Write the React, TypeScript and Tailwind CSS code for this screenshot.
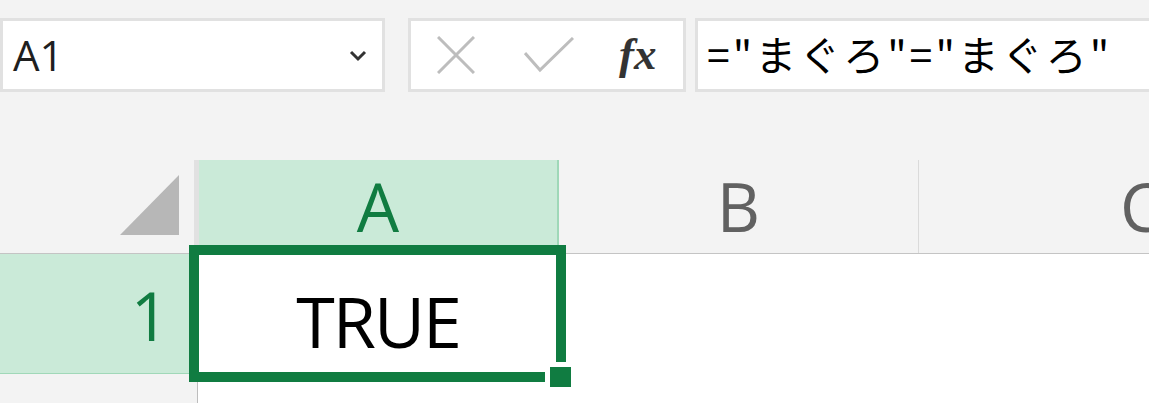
export default function App() {
  const ui = { fontFamily: '"Open Sans", "Noto Sans", sans-serif' }
  return (
    <div className="w-[1149px] h-[403px] bg-[#f3f3f3] overflow-hidden flex flex-col">
      {/* formula toolbar */}
      <div className="h-[160px] shrink-0 flex items-start pt-[18px]">
        <div className="w-[385px] h-[74px] shrink-0 bg-white border-[3px] border-[#e1e1e1] flex items-center justify-between pl-[10px] pr-[15px]">
          <span className="text-[42px] leading-none text-[#1f1f1f]" style={ui}>A1</span>
          <svg width="18" height="12" viewBox="0 0 18 12" className="mt-[2px]">
            <path d="M2 2 L9 9 L16 2" fill="none" stroke="#333" strokeWidth="3" />
          </svg>
        </div>
        <div className="ml-[23px] w-[278px] h-[74px] shrink-0 bg-white border-[3px] border-[#e1e1e1] flex items-center pl-[26px]">
          <svg width="38" height="38" viewBox="0 0 38 38">
            <path d="M1 1 L37 37 M37 1 L1 37" stroke="#bdbdbd" strokeWidth="3" fill="none" />
          </svg>
          <svg width="50" height="36" viewBox="0 0 50 36" className="ml-[49px]">
            <path d="M1 16 L16 33 L49 1" stroke="#bdbdbd" strokeWidth="3" fill="none" />
          </svg>
          <span
            className="ml-[45px] text-[45px] leading-none italic font-bold text-[#333] -mt-[2px]"
            style={{ fontFamily: '"Liberation Serif", serif' }}
          >
            fx
          </span>
        </div>
        <div className="ml-[9px] flex-1 min-w-[460px] h-[74px] bg-white border-[3px] border-r-0 border-[#e1e1e1] pl-[9px] pt-[6px]">
          <span
            className="text-[41px] leading-[52px] tracking-[3px] text-black whitespace-nowrap"
            style={{ fontFamily: '"Noto Sans CJK JP", sans-serif' }}
          >
            ="まぐろ"="まぐろ"
          </span>
        </div>
      </div>

      {/* sheet */}
      <div className="relative flex-1 flex flex-col" style={ui}>
        <div className="h-[94px] shrink-0 flex border-b border-[#c4c4c4]">
          <div className="w-[194px] shrink-0 flex items-end justify-end pr-[15px] pb-[18px]">
            <svg width="59" height="60" viewBox="0 0 59 60">
              <polygon points="59,0 59,60 0,60" fill="#b7b7b7" />
            </svg>
          </div>
          <div className="w-[5px] shrink-0 bg-[#e1e1e1]" />
          <div className="w-[360px] shrink-0 bg-[#caead8] border-r-2 border-[#9fd8b8] flex items-center justify-center text-[67px] leading-none text-[#107c41]">
            A
          </div>
          <div className="w-[360px] shrink-0 border-r border-[#dadada] flex items-center justify-center text-[67px] leading-none text-[#616161]">
            B
          </div>
          <div className="flex-1 flex items-center pl-[201px] text-[67px] leading-none text-[#616161]">C</div>
        </div>

        <div className="h-[120px] shrink-0 flex">
          <div className="w-[198px] shrink-0 bg-[#caead8] border-b border-[#a0d8b8] flex items-center justify-end pr-[29px] pt-[4px] text-[67px] leading-none text-[#107c41]">
            1
          </div>
          <div className="w-[360px] shrink-0 bg-white flex items-center justify-center pt-[14px] text-[70px] leading-none text-black tracking-[-2px]">
            TRUE
          </div>
          <div className="flex-1 bg-white" />
        </div>

        <div className="flex-1 flex">
          <div className="w-[198px] shrink-0 border-r border-[#bdbdbd]" />
          <div className="flex-1 bg-white" />
        </div>

        {/* active cell */}
        <div className="absolute left-[189px] top-[85px] w-[377px] h-[137px] border-[10px] border-[#107c41]" />
        <div className="absolute left-[545px] top-[202px] w-[31px] h-[30px] bg-[#107c41] border-[5px] border-white" />
      </div>
    </div>
  )
}
